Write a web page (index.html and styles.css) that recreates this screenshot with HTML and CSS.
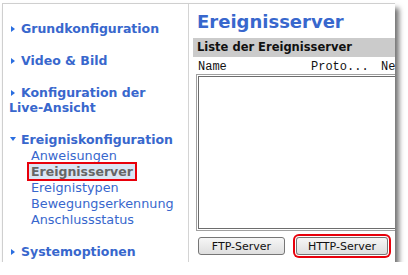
FILE: index.html
```html
<!DOCTYPE html>
<html lang="de">
<head>
    <meta charset="UTF-8">
    <meta name="viewport" content="width=device-width, initial-scale=1.0">
    <title>Ereignisserver</title>
    <link rel="stylesheet" href="styles.css">
</head>
<body>
    <div class="shot">
        <div class="menu">
            <div class="group"><span class="arrow"></span>Grundkonfiguration</div>
            <div class="group"><span class="arrow"></span>Video &amp; Bild</div>
            <div class="group"><span class="arrow"></span>Konfiguration der<br>Live-Ansicht</div>
            <div class="group open">
                <span class="arrow down"></span>Ereigniskonfiguration
                <ul class="sub">
                    <li>Anweisungen</li>
                    <li><span class="current">Ereignisserver</span></li>
                    <li>Ereignistypen</li>
                    <li>Bewegungserkennung</li>
                    <li>Anschlussstatus</li>
                </ul>
            </div>
            <div class="group"><span class="arrow"></span>Systemoptionen</div>
        </div>

        <div class="content">
            <h1>Ereignisserver</h1>
            <div class="bar">Liste der Ereignisserver</div>
            <div class="cols">
                <span class="col_name">Name</span>
                <span class="col_proto">Proto...</span>
                <span class="col_net">Ne</span>
            </div>
            <div class="list"></div>
            <div class="buttons">
                <button class="btn ftp">FTP-Server</button>
                <button class="btn http">HTTP-Server</button>
            </div>
        </div>
    </div>
</body>
</html>
```

FILE: styles.css
```css
* {
    margin: 0;
    padding: 0;
    box-sizing: border-box;
}

body {
    background-color: white;
    font-family: "DejaVu Sans", Verdana, sans-serif;
}

/* the screenshot frame with its drop shadow */
.shot {
    display: flex;
    width: 393px;
    height: 259px;
    margin: 3px 0 0 2px;
    border-top: 1px solid #cfcfcf;
    border-left: 1px solid #cfcfcf;
    background-color: white;
    overflow: hidden;
    box-shadow: 4px 5px 5px rgba(0, 0, 0, 0.55);
}

/* left navigation */
.menu {
    width: 186px;
    flex-shrink: 0;
    padding: 17px 0 0 6px;
    border-right: 1px solid #d4d4d4;
}

.group {
    font-size: 12.5px;
    font-weight: bold;
    line-height: 15px;
    color: #3867cd;
    margin-bottom: 17px;
}

.arrow {
    display: inline-block;
    width: 0;
    height: 0;
    margin: 0 6px 0 2px;
    border-top: 3.5px solid transparent;
    border-bottom: 3.5px solid transparent;
    border-left: 4px solid #2a6ee0;
    vertical-align: 1px;
}

.arrow.down {
    margin: 0 5px 0 1px;
    border-left: 3.5px solid transparent;
    border-right: 3.5px solid transparent;
    border-top: 4px solid #2a6ee0;
    border-bottom: 0;
    vertical-align: 3px;
}

.group.open {
    margin-bottom: 16px;
}

.sub {
    list-style: none;
    margin-top: 1px;
    padding-left: 22px;
}

.sub li {
    font-size: 12.8px;
    font-weight: normal;
    line-height: 16px;
}

.sub .current {
    display: inline-block;
    margin-left: -2px;
    padding: 0 2px;
    line-height: 15px;
    font-size: 12.5px;
    font-weight: bold;
    color: #666;
    background-color: #dbe6f4;
    outline: 2px solid #e8000b;
}

/* right content */
.content {
    flex: 1;
    min-width: 0;
    padding: 6px 0 0 4px;
}

h1 {
    font-size: 18px;
    line-height: 24px;
    color: #3867cd;
    padding-left: 4px;
    margin-bottom: 4px;
}

.bar {
    width: 220px;
    height: 19px;
    padding-left: 4px;
    background-color: #cbcbcb;
    font-size: 11.5px;
    font-weight: bold;
    line-height: 19px;
    color: #111;
}

.cols {
    display: flex;
    white-space: nowrap;
    padding: 3px 0 0 5px;
    height: 17px;
    font-family: "Liberation Mono", "Courier New", monospace;
    font-size: 12px;
    line-height: 14px;
    color: #111;
}

.cols span {
    flex-shrink: 0;
}

.col_name {
    width: 113px;
}

.col_proto {
    width: 70px;
}

.list {
    width: 220px;
    height: 157px;
    margin-left: 3px;
    border: 1px solid #a0a0a0;
    box-shadow: inset 0 0 0 1px #fff, inset 0 0 0 2px #6d6d6d;
    background-color: white;
}

.buttons {
    display: flex;
    gap: 11px;
    padding: 6px 0 0 5px;
}

.btn {
    height: 18px;
    border: 1px solid #767676;
    border-radius: 3px;
    background: linear-gradient(#f6f6f6, #dedede);
    font-family: "DejaVu Sans", Tahoma, sans-serif;
    font-size: 11px;
    color: #111;
}

.ftp {
    width: 87px;
}

.http {
    width: 92px;
    box-shadow: 0 0 0 1px #fff, 0 0 0 3px #e8000b;
}
```
